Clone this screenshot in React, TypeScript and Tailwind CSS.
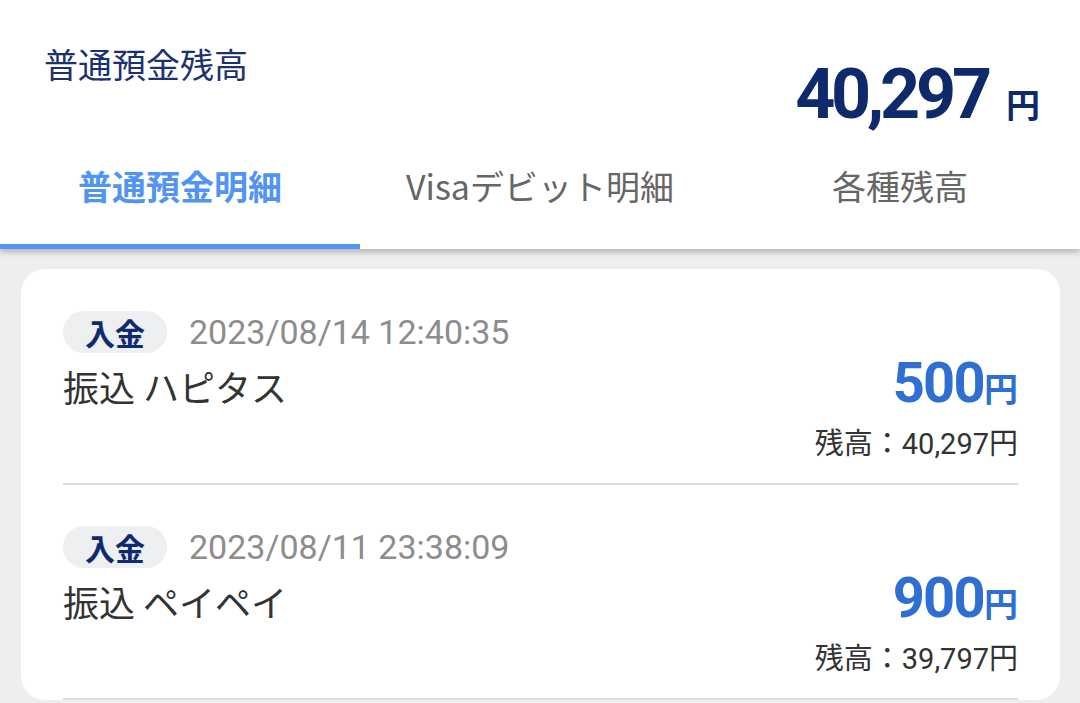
const rows = [
  {
    date: "2023/08/14 12:40:35",
    name: "振込 ハピタス",
    amount: "500",
    balance: "40,297",
  },
  {
    date: "2023/08/11 23:38:09",
    name: "振込 ペイペイ",
    amount: "900",
    balance: "39,797",
  },
];

const tabs = ["普通預金明細", "Visaデビット明細", "各種残高"];

const font = "font-['Roboto','Noto_Sans_CJK_JP',sans-serif]";

export default function App() {
  return (
    <div className={`h-[703px] w-full overflow-hidden bg-[#eeeeee] ${font}`}>
      {/* header */}
      <div className="relative z-10 bg-white pt-[44px] shadow-[0_3px_6px_rgba(0,0,0,0.25)]">
        <div className="flex items-start justify-between pl-[44px] pr-[40px]">
          <div className="text-[34px] leading-[40px] text-[#1b3170] font-['Noto_Sans_CJK_JP',sans-serif]">
            普通預金残高
          </div>
          <div className="mt-[15px] flex items-baseline text-[#0f2a6b]">
            <span className="text-[70px] font-bold leading-[70px] tracking-[-0.06em]">
              40,297
            </span>
            <span className="ml-[18px] text-[34px] font-bold font-['Noto_Sans_CJK_JP',sans-serif]">
              円
            </span>
          </div>
        </div>
        <div className="grid grid-cols-3">
          {tabs.map((t, i) => (
            <div key={t} className="flex flex-col">
              <div
                className={`flex h-[115px] items-center justify-center pb-[3px] text-[34px] font-['Noto_Sans_CJK_JP',sans-serif] ${
                  i === 0 ? "font-bold text-[#5294f2]" : "text-[#666666]"
                }`}
              >
                {t}
              </div>
              <div className={`h-[5px] ${i === 0 ? "bg-[#5294f2]" : "bg-white"}`} />
            </div>
          ))}
        </div>
      </div>

      {/* list card */}
      <div className="ml-[21px] mr-[20px] mt-[20px] h-[431px] overflow-hidden rounded-[24px] bg-white px-[42px] pt-[42px]">
        {rows.map((r) => (
          <div key={r.date} className="mb-[41px]">
            <div className="flex h-[42px] items-center">
              <span className="h-[42px] rounded-full bg-[#eeeff1] px-[22px] text-[30px] font-bold leading-[42px] text-[#0f2a6e] font-['Noto_Sans_CJK_JP',sans-serif]">
                入金
              </span>
              <span className="ml-[22px] text-[34px] text-[#8d8d8d]">{r.date}</span>
            </div>
            <div className="mt-[2px] flex items-baseline justify-between">
              <span className="text-[36px] text-[#333333] font-['Noto_Sans_CJK_JP',sans-serif]">
                {r.name}
              </span>
              <span className="flex items-baseline text-[#2f6fd1]">
                <span className="text-[56px] font-bold leading-[56px] tracking-[-0.03em]">
                  {r.amount}
                </span>
                <span className="text-[34px] font-bold font-['Noto_Sans_CJK_JP',sans-serif]">
                  円
                </span>
              </span>
            </div>
            <div className="mt-[10px] text-right text-[29px] leading-[42px] text-[#333333]">
              残高：{r.balance}円
            </div>
            <div className="mt-[18px] h-[2px] bg-[#dedede]" />
          </div>
        ))}
      </div>
    </div>
  );
}
